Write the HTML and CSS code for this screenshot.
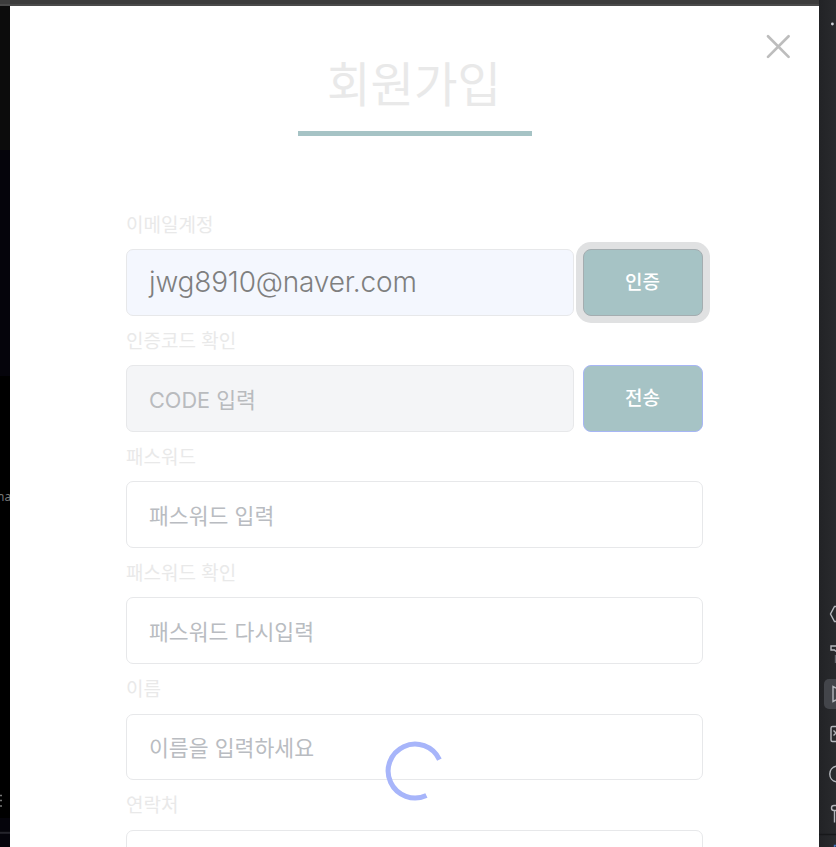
FILE: index.html
```html
<!DOCTYPE html>
<html lang="ko">
<head>
<meta charset="utf-8">
<title>회원가입</title>
<link rel="stylesheet" href="styles.css">
</head>
<body>
<div class="topbar"></div>
<div class="workspace">
  <div class="left-strip">
    <span class="left-text">na</span>
    <svg class="left-marks" width="10" height="80" viewBox="0 0 10 80"><path d="M0 28.5h2M0 33.5h2M0 39h2" stroke="#777" stroke-width="1.5"/><path d="M0 65.8h10" stroke="#25252c" stroke-width="2"/></svg>
  </div>
  <main class="modal">
    <button class="close" aria-label="닫기"><svg width="26" height="26" viewBox="0 0 26 26"><path d="M3 2.300l20.600 20.600M23.600 2.300l-20.600 20.600" stroke="#bdbdbd" stroke-width="2.7" stroke-linecap="round"/></svg></button>
    <h1 class="title">회원가입</h1>
    <form class="form">
      <label class="label">이메일계정</label>
      <div class="row">
        <div class="input filled">jwg8910@naver.com</div>
        <button type="button" class="btn focused">인증</button>
      </div>
      <label class="label">인증코드 확인</label>
      <div class="row">
        <div class="input disabled"><span class="latin">CODE</span> 입력</div>
        <button type="button" class="btn">전송</button>
      </div>
      <label class="label">패스워드</label>
      <div class="row"><div class="input">패스워드 입력</div></div>
      <label class="label">패스워드 확인</label>
      <div class="row"><div class="input">패스워드 다시입력</div></div>
      <label class="label">이름</label>
      <div class="row"><div class="input">이름을 입력하세요</div></div>
      <label class="label">연락처</label>
      <div class="row"><div class="input"></div></div>
    </form>
    <svg class="spinner" width="60" height="60" viewBox="-30 -30 60 60"><path d="M11.4 24.4A26.9 26.9 0 1 1 24.4 -11.4" fill="none" stroke="#a7b5fa" stroke-width="5"/></svg>
  </main>
  <div class="right-strip">
    <svg width="17" height="841" viewBox="0 6 17 841" fill="none" stroke="#b4b6bb" stroke-width="1.4">
      <circle cx="13.4" cy="24" r="1.4" fill="#ced0d6" stroke="none"/>
      <path d="M17 606.5h-1.5l-4 7.5 4 7.5H17"/>
      <path d="M17 646H12v4h3.500l1.500 1.500"/><path d="M16.500 655v8" stroke="#66686d"/>
      <rect x="5" y="679" width="24" height="30" rx="5" fill="#43454a" stroke="none"/>
      <path d="M17 688l-3-1.500v15l3-1.500"/>
      <path d="M17 726.500h-3.500q-1.500 0-1.500 1.500v12q0 1.500 1.500 1.500H17M14.500 730.500l2.500 2.500M14.500 735.500l2.500-2.500"/>
      <path d="M17 766.200a8 8 0 0 0 0 15.600"/>
      <path d="M17 805.500h-2a2.500 2.500 0 0 0 0 5h2M15.500 810.500v12"/>
      <path d="M0 834.500h17" stroke="#17181a"/>
      <path d="M17 845.500h-1.500v1.500" stroke="#4673bd"/>
    </svg>
  </div>
</div>
</body>
</html>
```
FILE: styles.css
```css
* { box-sizing: border-box; }
body {
  margin: 0;
  height: 847px;
  overflow: hidden;
  display: flex;
  flex-direction: column;
  background: #27282b;
  font-family: "Inter", "Noto Sans CJK KR", sans-serif;
}
.topbar {
  flex: 0 0 6px;
  width: 819px;
  background: linear-gradient(#3c3c3c 4px, #4a4a4a 4px);
}
.workspace {
  flex: 1;
  min-height: 0;
  display: grid;
  grid-template-columns: 10px 809px 17px;
}
.left-strip {
  overflow: hidden;
  display: flex;
  flex-direction: column;
  justify-content: space-between;
  padding-top: 483px;
  background: linear-gradient(#0c0c0c 144px, #05040b 144px, #05040b 370px, #000 370px, #000 812px, #05040b 812px);
}
.left-text {
  margin-left: -3px;
  font: 12px/16px "Noto Sans", sans-serif;
  color: #777;
}
.left-marks { flex: none; }
.modal {
  position: relative;
  background: #fff;
  overflow: hidden;
}
.close {
  position: absolute;
  top: 28px;
  right: 28px;
  padding: 0;
  border: 0;
  background: none;
  line-height: 0;
}
.title {
  width: 234px;
  height: 130px;
  margin: 0 0 0 288px;
  padding-top: 44px;
  border-bottom: 5px solid #a6c3c5;
  font-size: 47.300px;
  line-height: 70px;
  font-weight: 400;
  text-align: center;
  text-indent: -2px;
  color: #e9e9e9;
}
.form {
  width: 577px;
  margin: 63.500px 0 0 116px;
}
.label {
  display: block;
  height: 49.500px;
  padding: 12px 0 0;
  font-size: 19px;
  line-height: 28px;
  color: #e9e9e9;
}
.row {
  display: flex;
  gap: 9px;
  height: 66.650px;
}
.input {
  flex: 1;
  padding: 1.500px 22px 0;
  border: 1px solid #e7e8ea;
  border-radius: 7px;
  background: #fff;
  font-size: 21.600px;
  line-height: 64px;
  color: #b9bcc1;
  white-space: pre;
}
.filled {
  padding-top: 0;
  background: #f4f7fe;
  font-size: 28px;
  font-weight: 300;
  letter-spacing: -0.180px;
  color: #7f7f7f;
}
.disabled {
  padding-top: 2px;
  background: #f4f5f7;
  color: #b9bbbe;
}
.latin { font-size: 21.700px; }
.btn {
  flex: 0 0 120px;
  padding: 0 1px 3px 0;
  border: 1px solid #a7b6f5;
  border-radius: 8px;
  background: #a6c3c5;
  font-family: inherit;
  font-size: 19px;
  font-weight: 500;
  color: #fff;
}
.focused {
  border-color: #a4adb0;
  box-shadow: 0 0 0 7px #e0e1e2;
}
.spinner {
  position: absolute;
  left: 375px;
  top: 735px;
}
.right-strip {
  margin-top: -6px;
  padding-top: 6px;
  overflow: hidden;
  background: linear-gradient(90deg, #222326, #292a2d);
}
```
